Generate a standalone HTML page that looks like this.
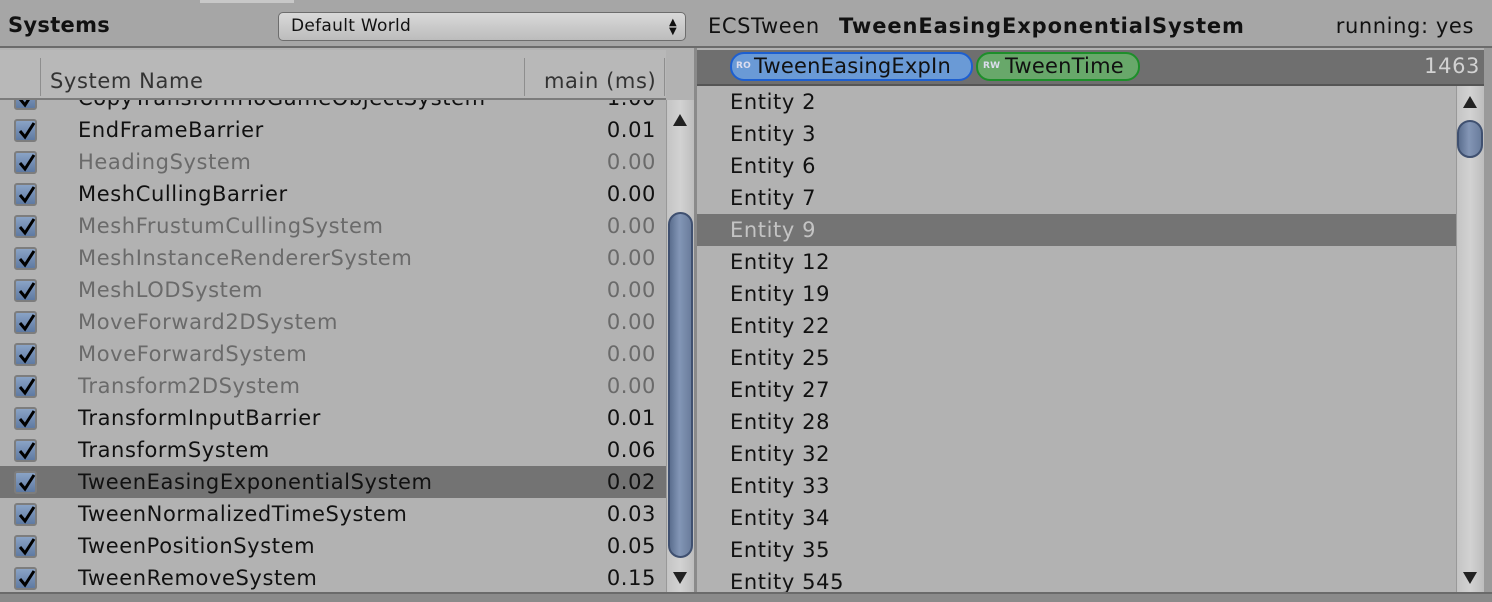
<!DOCTYPE html>
<html><head><style>
*{margin:0;padding:0;box-sizing:border-box}
body{width:1492px;height:602px;overflow:hidden;background:#b2b2b2;font-family:"DejaVu Sans","Liberation Sans",sans-serif;font-size:21px;letter-spacing:0.6px;color:#111;position:relative}
.a{position:absolute}
.row{position:absolute;left:0;height:32px;line-height:32px;white-space:nowrap}
.cb{position:absolute;left:14px;top:5px;width:23px;height:23px;border:2px solid #7d7d7d;border-radius:3px;background:linear-gradient(#8aa3c6,#5f7aa2)}
.cb svg{position:absolute;left:1px;top:0}
.nm{position:absolute;left:78px}
.v{position:absolute;right:0;width:80px;text-align:right}
.g{color:#6a6a6a}
.ent{position:absolute;left:697px;width:759px;height:32px;line-height:32px;padding-left:33px}
.thumb{position:absolute;border:2px solid #3f5070;background:linear-gradient(90deg,#5c6f8f,#8396b6 45%,#6a7d9c);border-radius:14px}
.sb{position:absolute;background:linear-gradient(90deg,#c4c4c4,#d2d2d2 50%,#bdbdbd);border-left:1px solid #999}
.tri{position:absolute;width:0;height:0;border-left:7px solid transparent;border-right:7px solid transparent}
</style></head><body>
<div class="a" style="left:0;top:0;width:1492px;height:48px;background:#a6a6a6;border-bottom:2px solid #6b6b6b"></div>
<div class="a" style="left:200px;top:0;width:94px;height:3px;background:#c8c8c8"></div>
<div class="a" style="left:8px;top:13px;font-weight:bold;font-size:21px;letter-spacing:0.3px">Systems</div>
<div class="a" style="left:278px;top:12px;width:408px;height:29px;border:1px solid #6d6d6d;border-radius:5px;background:linear-gradient(#d9d9d9,#bcbcbc);font-size:17px;letter-spacing:0.3px;line-height:27px;padding-left:12px">Default World<span style="position:absolute;right:8px;top:0;font-size:10px;line-height:9px;padding-top:5px">▲<br>▼</span></div>
<div class="a" style="left:708px;top:14px">ECSTween</div>
<div class="a" style="left:839px;top:14px;font-weight:bold;letter-spacing:0.9px">TweenEasingExponentialSystem</div>
<div class="a" style="right:18px;top:14px">running: yes</div>
<div class="a" style="left:0;top:50px;width:666px;height:50px;background:#b8b8b8;border-bottom:2px solid #7c7c7c"></div>
<div class="a" style="left:40px;top:58px;width:1px;height:38px;background:#8e8e8e"></div>
<div class="a" style="left:524px;top:58px;width:1px;height:38px;background:#8e8e8e"></div>
<div class="a" style="left:664px;top:58px;width:1px;height:38px;background:#8e8e8e"></div>
<div class="a" style="left:50px;top:69px;color:#333">System Name</div>
<div class="a" style="left:544px;top:69px;color:#333">main (ms)</div>
<div class="a" style="left:0;top:100px;width:666px;height:492px;overflow:hidden">
<div id="rows"></div>
</div>
<div class="sb" style="left:666px;top:100px;width:28px;height:492px"></div>
<div class="tri" style="left:673px;top:114px;border-bottom:12px solid #222"></div>
<div class="tri" style="left:673px;top:572px;border-top:12px solid #222"></div>
<div class="thumb" style="left:668px;top:212px;width:25px;height:346px"></div>
<div class="a" style="left:694px;top:48px;width:3px;height:546px;background:#8a8a8a"></div>
<div class="a" style="left:697px;top:50px;width:795px;height:36px;background:#6f6f6f;border-bottom:2px solid #555"></div>
<div class="a" style="left:730px;top:52px;width:243px;height:29px;border:2px solid #1d5fd0;border-radius:14px;background:#6a9ad6;line-height:25px;padding-left:22px;letter-spacing:0.2px">TweenEasingExpIn<span style="position:absolute;left:4px;top:0;font-size:9px;color:#dde;font-weight:bold">RO</span></div>
<div class="a" style="left:976px;top:52px;width:164px;height:29px;border:2px solid #1d8e2a;border-radius:14px;background:#68a86a;line-height:25px;padding-left:27px;letter-spacing:0.2px">TweenTime<span style="position:absolute;left:5px;top:0;font-size:9px;color:#dde;font-weight:bold">RW</span></div>
<div class="a" style="right:12px;top:54px;color:#d2d2d2">1463</div>
<div class="a" style="left:697px;top:86px;width:759px;height:506px;overflow:hidden"><div id="ents" style="position:relative;left:-697px;top:-86px"></div></div>
<div class="sb" style="left:1456px;top:86px;width:28px;height:506px"></div>
<div class="tri" style="left:1463px;top:96px;border-bottom:12px solid #222"></div>
<div class="tri" style="left:1463px;top:572px;border-top:12px solid #222"></div>
<div class="thumb" style="left:1457px;top:120px;width:26px;height:38px"></div>
<div class="a" style="left:1484px;top:48px;width:8px;height:546px;background:#9a9a9a"></div>
<div class="a" style="left:0;top:592px;width:1492px;height:10px;background:#8a8a8a;border-top:2px solid #6a6a6a"></div>
<script>
var L=[["CopyTransformToGameObjectSystem","1.00",0],["EndFrameBarrier","0.01",0],["HeadingSystem","0.00",1],["MeshCullingBarrier","0.00",0],["MeshFrustumCullingSystem","0.00",1],["MeshInstanceRendererSystem","0.00",1],["MeshLODSystem","0.00",1],["MoveForward2DSystem","0.00",1],["MoveForwardSystem","0.00",1],["Transform2DSystem","0.00",1],["TransformInputBarrier","0.01",0],["TransformSystem","0.06",0],["TweenEasingExponentialSystem","0.02",0],["TweenNormalizedTimeSystem","0.03",0],["TweenPositionSystem","0.05",0],["TweenRemoveSystem","0.15",0]];
var h="";L.forEach(function(r,i){var t=-18+32*i;var sel=i==12;
h+='<div class="row" style="top:'+t+'px;width:666px;'+(sel?'background:#737373;':'')+'"><div class="cb"><svg width="20" height="20" viewBox="0 0 20 20"><path d="M3 10 L8 16 L17 2" fill="none" stroke="#000" stroke-width="3"/></svg></div><span class="nm'+(r[2]?' g':'')+'">'+r[0]+'</span><span class="v'+(r[2]?' g':'')+'" style="right:10px">'+r[1]+'</span></div>';});
document.getElementById("rows").innerHTML=h;
var E=[2,3,6,7,9,12,19,22,25,27,28,32,33,34,35,545];var e="";
E.forEach(function(n,i){var sel=n==9;e+='<div class="ent" style="top:'+(86+32*i)+'px;'+(sel?'background:#747474;color:#c4c4c4;':'')+'">Entity '+n+'</div>';});
document.getElementById("ents").innerHTML=e;
</script>
</body></html>
